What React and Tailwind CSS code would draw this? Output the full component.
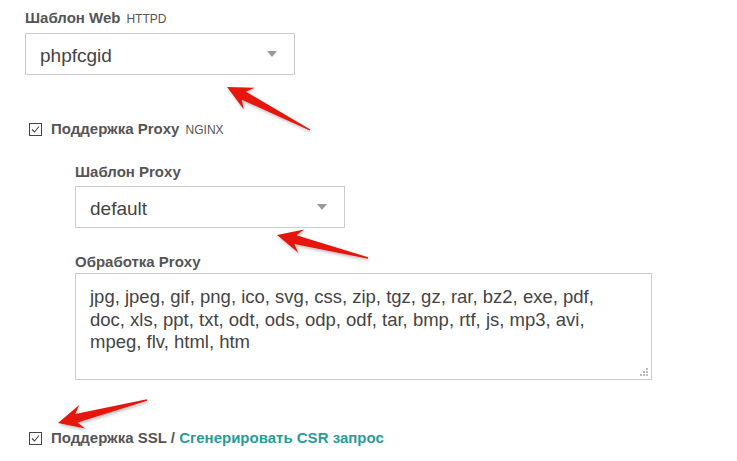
import { useMemo } from 'react'

const FONT = { fontFamily: '"Liberation Sans", Arial, sans-serif' }

// red annotation arrow, drawn from tip back to tail
function Arrow({ tip, tail }) {
    const pts = useMemo(() => {
        const [tx, ty] = tip
        const dx = tail[0] - tx
        const dy = tail[1] - ty
        const len = Math.hypot(dx, dy)
        const ux = dx / len
        const uy = dy / len
        const local = [
            [0, 0], [25, -12], [19, -4.5], [len, -0.7],
            [len, 0.7], [19, 4.5], [25, 12],
        ]
        return local
            .map(([a, b]) => `${(tx + a * ux - b * uy).toFixed(1)},${(ty + a * uy + b * ux).toFixed(1)}`)
            .join(' ')
    }, [tip, tail])
    return <polygon points={pts} fill="#e5170d" />
}

function Select({ value }) {
    return (
        <div className="flex items-center justify-between w-[270px] h-[42px] border border-[#cccccc] bg-white pl-[14px] pr-[17px]">
            <span className="text-[19px] text-[#444444] pt-[4px]">{value}</span>
            <span className="w-0 h-0 border-l-[5px] border-r-[5px] border-t-[6px] border-l-transparent border-r-transparent border-t-[#999999]" />
        </div>
    )
}

function Check({ children }) {
    return (
        <div className="flex items-center gap-[9px] pl-[29px] h-[18px]">
            <svg width="13" height="13" viewBox="0 0 13 13" className="shrink-0">
                <rect x="0.5" y="0.5" width="12" height="12" fill="white" stroke="#444444" />
                <path d="M3 6.5 L5.5 9 L10 3.5" fill="none" stroke="#444444" strokeWidth="1.1" />
            </svg>
            <div className="text-[15px] leading-[18px] font-bold text-[#555555] whitespace-nowrap">{children}</div>
        </div>
    )
}

function Label({ children }) {
    return <div className="text-[15px] leading-[18px] font-bold text-[#555555]">{children}</div>
}

export default function App() {
    return (
        <div className="relative w-[737px] h-[461px] bg-white overflow-hidden" style={FONT}>
            <div className="pl-[25px] pt-[9px]">
                <div className="flex items-baseline gap-[6px] text-[#555555] h-[18px]">
                    <span className="text-[15px] leading-[18px] font-bold">Шаблон Web</span>
                    <span className="text-[12px]">HTTPD</span>
                </div>
                <div className="mt-[6px]">
                    <Select value="phpfcgid" />
                </div>
            </div>

            <div className="mt-[45px]">
                <Check>
                    Поддержка Proxy <span className="text-[12px] font-normal ml-[2px]">NGINX</span>
                </Check>
            </div>

            <div className="pl-[75px] mt-[25px]">
                <Label>Шаблон Proxy</Label>
                <div className="mt-[5px]">
                    <Select value="default" />
                </div>

                <div className="mt-[25px]">
                    <Label>Обработка Proxy</Label>
                </div>
                <div className="relative mt-[2px] w-[577px] h-[107px] border border-[#cccccc] pl-[14px] pr-[20px] pt-[12px] text-[18.5px] leading-[22.5px] text-[#444444]">
                    jpg, jpeg, gif, png, ico, svg, css, zip, tgz, gz, rar, bz2, exe, pdf, doc, xls, ppt, txt, odt, ods, odp, odf, tar, bmp, rtf, js, mp3, avi, mpeg, flv, html, htm
                    <svg width="8" height="8" viewBox="0 0 8 8" className="absolute right-[3px] bottom-[3px]">
                        <rect x="6" y="0" width="2" height="2" fill="#bbbbbb" />
                        <rect x="3" y="3" width="2" height="2" fill="#bbbbbb" />
                        <rect x="6" y="3" width="2" height="2" fill="#bbbbbb" />
                        <rect x="0" y="6" width="2" height="2" fill="#bbbbbb" />
                        <rect x="3" y="6" width="2" height="2" fill="#bbbbbb" />
                        <rect x="6" y="6" width="2" height="2" fill="#bbbbbb" />
                    </svg>
                </div>
            </div>

            <div className="mt-[49px]">
                <Check>
                    Поддержка SSL / <span className="text-[#2a9c98]">Сгенерировать CSR запрос</span>
                </Check>
            </div>

            {/* annotation arrows */}
            <svg width="737" height="461" className="absolute inset-0 pointer-events-none">
                <defs>
                    <filter id="sh" x="-20%" y="-20%" width="140%" height="140%">
                        <feDropShadow dx="1" dy="2" stdDeviation="1.5" floodColor="#000" floodOpacity="0.25" />
                    </filter>
                </defs>
                <g filter="url(#sh)">
                    <Arrow tip={[227, 87]} tail={[310, 130]} />
                    <Arrow tip={[277, 235]} tail={[368, 258]} />
                    <Arrow tip={[58, 423]} tail={[147, 400]} />
                </g>
            </svg>
        </div>
    )
}
